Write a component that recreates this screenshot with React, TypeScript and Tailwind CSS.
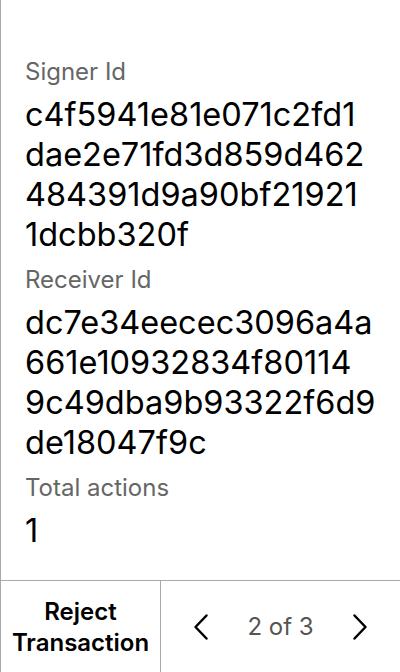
import React from "react";

const FIELDS: { label: string; lines: string[] }[] = [
  {
    label: "Signer Id",
    lines: ["c4f5941e81e071c2fd1", "dae2e71fd3d859d462", "484391d9a90bf21921", "1dcbb320f"],
  },
  {
    label: "Receiver Id",
    lines: ["dc7e34eecec3096a4a", "661e10932834f80114", "9c49dba9b93322f6d9", "de18047f9c"],
  },
  { label: "Total actions", lines: ["1"] },
];

function Chevron({ dir }: { dir: "left" | "right" }) {
  return (
    <svg width="16" height="28" viewBox="0 0 16 28" fill="none" stroke="#000" strokeWidth="2.5" strokeLinecap="round" strokeLinejoin="round">
      {dir === "left" ? <path d="M13.5 2.5 L2.5 14 L13.5 25.5" /> : <path d="M2.5 2.5 L13.5 14 L2.5 25.5" />}
    </svg>
  );
}

export default function App() {
  return (
    <div
      className="flex h-[672px] w-[400px] flex-col border-l border-[#a9a9a9] bg-white text-black"
      style={{ fontFamily: "Inter, 'Noto Sans', sans-serif" }}
    >
      <div className="flex flex-1 flex-col gap-[11px] px-6 pt-[58px]">
        {FIELDS.map((f) => (
          <div key={f.label} className="flex flex-col">
            <div className="text-[24px] leading-[28px] text-[#666666]">{f.label}</div>
            <div className="mt-[9px] text-[32.5px] leading-[40px]">
              {f.lines.map((l) => (
                <div key={l} className="whitespace-nowrap">{l}</div>
              ))}
            </div>
          </div>
        ))}
      </div>
      <div className="flex h-[92px] border-t border-[#a9a9a9]">
        <button className="flex w-[160px] items-center justify-center border-r border-[#a9a9a9] text-center text-[24px] font-semibold leading-[31px]">
          Reject
          <br />
          Transaction
        </button>
        <div className="flex flex-1 items-center justify-between pl-[32px] pr-[32px]">
          <button className="flex items-center justify-center">
            <Chevron dir="left" />
          </button>
          <span className="text-[24px] text-[#555555]">2 of 3</span>
          <button className="flex items-center justify-center">
            <Chevron dir="right" />
          </button>
        </div>
      </div>
    </div>
  );
}
